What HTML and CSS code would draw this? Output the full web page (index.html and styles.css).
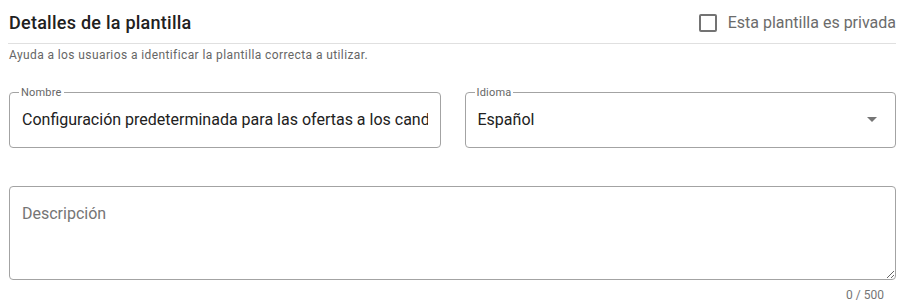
FILE: index.html
```html
<!DOCTYPE html>
<html lang="es">
<head>
<meta charset="utf-8">
<link rel="stylesheet" href="styles.css">
</head>
<body>
<div class="panel">
  <div class="header">
    <h2 class="title">Detalles de la plantilla</h2>
    <label class="check">
      <span class="box"></span>
      <span class="check-label">Esta plantilla es privada</span>
    </label>
  </div>
  <p class="subtitle">Ayuda a los usuarios a identificar la plantilla correcta a utilizar.</p>
  <div class="row">
    <fieldset class="field">
      <legend>Nombre</legend>
      <div class="value">Configuración predeterminada para las ofertas a los candidatos</div>
    </fieldset>
    <fieldset class="field">
      <legend>Idioma</legend>
      <div class="value select">
        <span>Español</span>
        <span class="arrow"></span>
      </div>
    </fieldset>
  </div>
  <textarea class="desc" placeholder="Descripción"></textarea>
  <div class="counter">0 / 500</div>
</div>
</body>
</html>
```
FILE: styles.css
```css
html, body {
  margin: 0;
  padding: 0;
  background: #ffffff;
  font-family: Roboto, "Liberation Sans", Arial, sans-serif;
}

.panel {
  padding: 0 11px 0 9px;
}

.header {
  display: flex;
  align-items: center;
  justify-content: space-between;
  padding: 11px 0 8px;
  border-bottom: 1px solid #e0e0e0;
  margin-left: -1px;
}

.title {
  margin: 0;
  font-size: 18px;
  line-height: 24px;
  font-weight: 500;
  letter-spacing: 0.25px;
  color: #212121;
  padding-left: 1px;
}

.check {
  display: flex;
  align-items: center;
  gap: 11px;
}

.box {
  width: 14px;
  height: 14px;
  border: 2px solid #737373;
  border-radius: 2px;
}

.check-label {
  font-size: 16px;
  line-height: 24px;
  color: #6b6b6b;
}

.subtitle {
  margin: 3px 0 0;
  font-size: 12px;
  line-height: 17px;
  letter-spacing: 0.4px;
  color: #666666;
}

.row {
  display: grid;
  grid-template-columns: 1fr 1fr;
  gap: 24px;
  margin-top: 22px;
}

.field {
  margin: 0;
  min-width: 0;
  border: 1px solid #a3a3a3;
  border-radius: 4px;
  padding: 0 12px 8px;
}

.field legend {
  font-size: 11px;
  line-height: 13px;
  letter-spacing: 0.2px;
  color: #666666;
  padding: 0 2px;
  margin-left: -3px;
}

.value {
  height: 40px;
  display: flex;
  align-items: center;
  font-size: 16px;
  color: #212121;
  white-space: nowrap;
  overflow: hidden;
}

.select {
  justify-content: space-between;
}

.arrow {
  width: 0;
  height: 0;
  border-left: 5px solid transparent;
  border-right: 5px solid transparent;
  border-top: 5px solid #757575;
  margin-right: 6px;
}

.desc {
  display: block;
  box-sizing: border-box;
  width: 100%;
  height: 94px;
  margin: 38px 0 0;
  border: 1px solid #a3a3a3;
  border-radius: 4px;
  padding: 15px 12px 11px;
  font-family: Roboto, "Liberation Sans", Arial, sans-serif;
  font-size: 16px;
  line-height: 24px;
  color: #212121;
  outline: none;
}

.desc::placeholder {
  color: #757575;
  opacity: 1;
}

.counter {
  text-align: right;
  font-size: 12px;
  line-height: 16px;
  color: #757575;
  padding: 7px 12px 0 0;
}
```
